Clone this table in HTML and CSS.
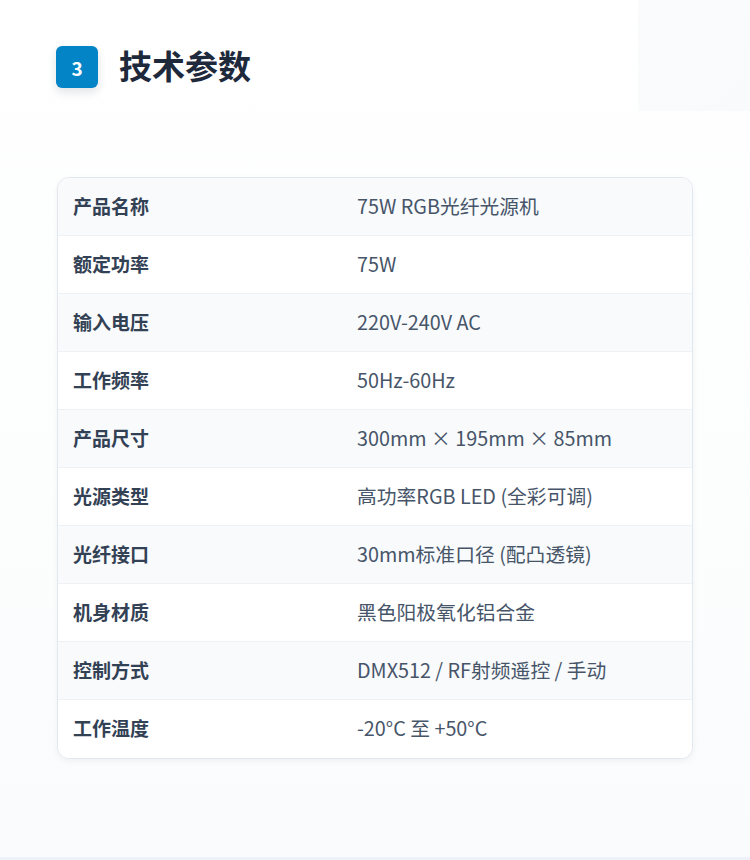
FILE: index.html
```html
<!DOCTYPE html>
<html lang="zh-CN">
<head>
<meta charset="utf-8">
<title>技术参数</title>
<link rel="stylesheet" href="styles.css">
</head>
<body>
<div class="page">
  <div class="corner"></div>
  <header class="section-head">
    <div class="badge">3</div>
    <h2 class="title">技术参数</h2>
  </header>
  <div class="card">
    <div class="row odd"><div class="label">产品名称</div><div class="value">75W RGB光纤光源机</div></div>
    <div class="row"><div class="label">额定功率</div><div class="value">75W</div></div>
    <div class="row odd"><div class="label">输入电压</div><div class="value">220V-240V AC</div></div>
    <div class="row"><div class="label">工作频率</div><div class="value">50Hz-60Hz</div></div>
    <div class="row odd"><div class="label">产品尺寸</div><div class="value">300mm × 195mm × 85mm</div></div>
    <div class="row"><div class="label">光源类型</div><div class="value">高功率RGB LED (全彩可调)</div></div>
    <div class="row odd"><div class="label">光纤接口</div><div class="value">30mm标准口径 (配凸透镜)</div></div>
    <div class="row"><div class="label">机身材质</div><div class="value">黑色阳极氧化铝合金</div></div>
    <div class="row odd"><div class="label">控制方式</div><div class="value">DMX512 / RF射频遥控 / 手动</div></div>
    <div class="row last"><div class="label">工作温度</div><div class="value">-20°C 至 +50°C</div></div>
  </div>
  <div class="bottom-line"></div>
</div>
</body>
</html>
```
FILE: styles.css
```css
* { box-sizing: border-box; }
html, body { margin: 0; padding: 0; }
body {
  width: 750px;
  height: 860px;
  overflow: hidden;
  font-family: "Noto Sans CJK SC", "Noto Sans", sans-serif;
  background: linear-gradient(180deg, #ffffff 0%, #fcfdfd 60%, #fafbfc 100%);
}
.page {
  position: relative;
  height: 860px;
  padding: 46px 57px 0 56px;
}
.corner {
  position: absolute;
  top: 0;
  right: 0;
  width: 112px;
  height: 111px;
  background: linear-gradient(135deg, #fafbfc 0%, #f8fafb 100%);
}
.section-head {
  position: relative;
  display: flex;
  align-items: center;
  gap: 21px;
  height: 42px;
}
.badge {
  width: 42px;
  height: 42px;
  border-radius: 6px;
  background: #0284c7;
  color: #ffffff;
  font-weight: 700;
  font-size: 19px;
  display: flex;
  align-items: center;
  justify-content: center;
  box-shadow: 0 4px 10px rgba(15, 23, 42, 0.12);
}
.title {
  margin: 0;
  font-size: 33px;
  font-weight: 700;
  color: #1e293b;
  line-height: 42px;
  position: relative;
  top: -2px;
}
.card {
  position: relative;
  margin: 89px 0 0 1px;
  width: 636px;
  border: 1px solid #e2e8f0;
  border-radius: 12px;
  background: #ffffff;
  overflow: hidden;
  box-shadow: 0 2px 6px rgba(15, 23, 42, 0.05);
}
.row {
  display: grid;
  grid-template-columns: 284px 1fr;
  height: 58px;
  align-items: center;
  border-bottom: 1px solid #eef2f7;
  background: #ffffff;
  padding-bottom: 3px;
}
.row.odd { background: #f8fafc; }
.row.last { border-bottom: none; height: 58px; }
.label {
  padding-left: 15px;
  font-size: 19px;
  font-weight: 700;
  color: #334155;
}
.value {
  padding-left: 15px;
  font-size: 19.8px;
  color: #475569;
}
.bottom-line {
  position: absolute;
  left: 0;
  right: 0;
  bottom: 0;
  height: 3px;
  background: #eef2f8;
}
```
